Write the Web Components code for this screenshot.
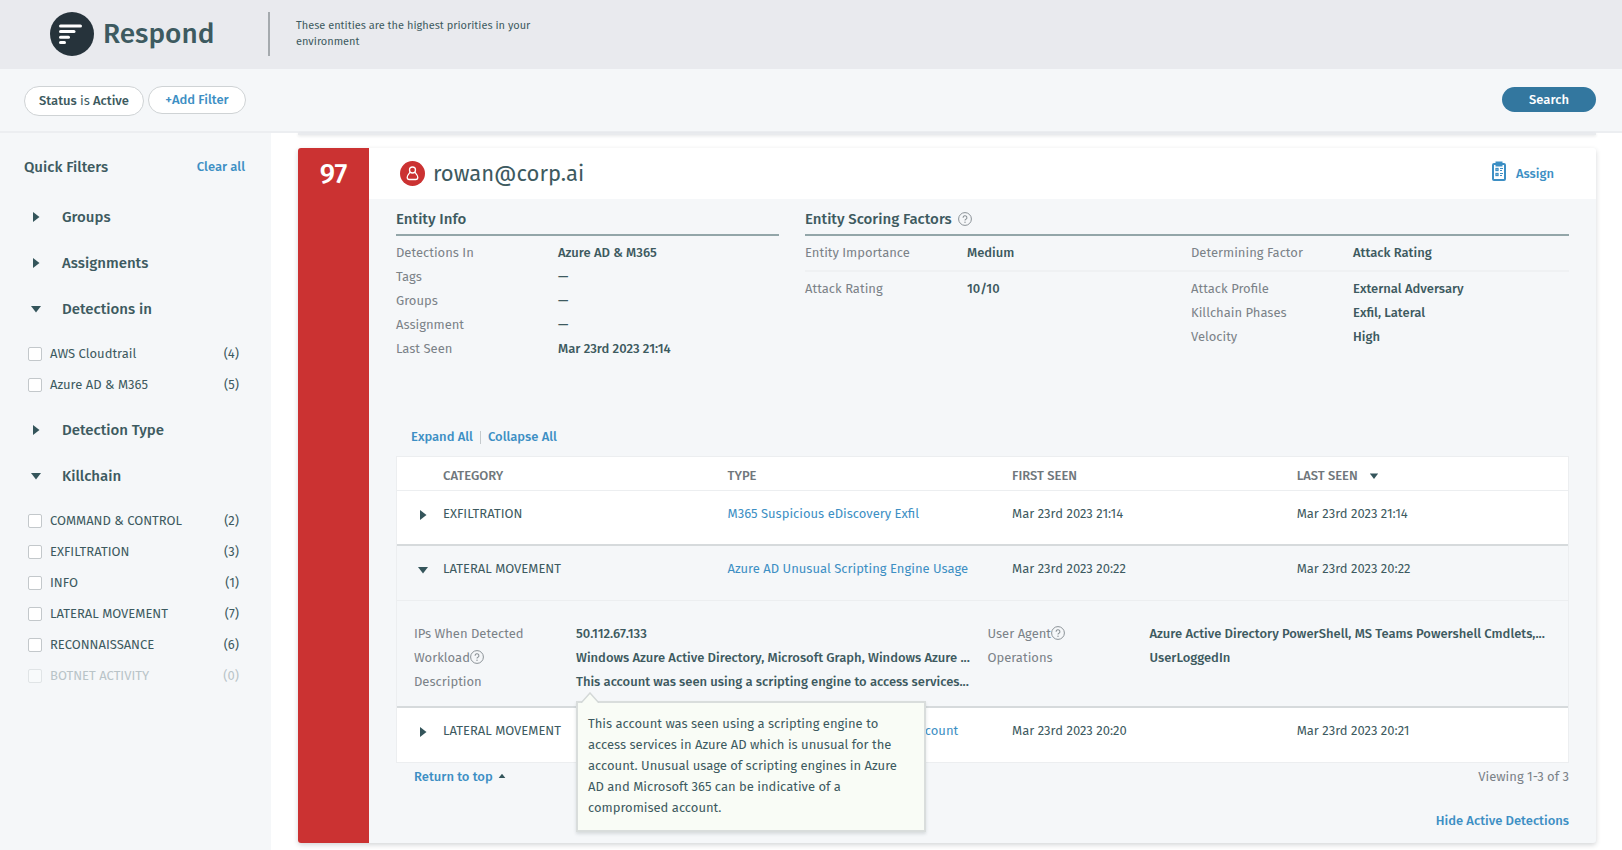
<!DOCTYPE html>
<html lang="en">
<head>
<meta charset="utf-8">
<meta name="viewport" content="width=device-width, initial-scale=1">
<title>Respond</title>
<style>
  :root {
    --ink: #3d5a60;
    --muted: #7b8288;
    --link: #3d8fc4;
    --panel: #f5f7f9;
    --line: #eceef0;
    --rule: #93a6a9;
    --danger: #cb3232;
  }
  body {
    margin: 0;
    background: #fff;
    color: var(--ink);
    font: 400 13px/24px "Fira Sans", Roboto, "Noto Sans", sans-serif;
  }
</style>
</head>
<body>
<respond-app></respond-app>

<script>
const define = (name, html, setup) => {
  const tpl = document.createElement('template');
  tpl.innerHTML = html;
  customElements.define(name, class extends HTMLElement {
    constructor() {
      super();
      this.attachShadow({ mode: 'open' }).append(tpl.content.cloneNode(true));
    }
    connectedCallback() {
      if (setup && !this.ready) { this.ready = true; setup(this, this.shadowRoot); }
    }
  });
};

/* Small triangle: dir = right | down | up */
define('caret-icon', `
  <style>
    :host { display: inline-flex; width: 12px; height: 12px; color: #34555b; }
    svg { width: 12px; height: 12px; fill: currentColor; }
    :host([dir=down]) svg { transform: rotate(90deg); }
    :host([dir=up]) svg { transform: rotate(-90deg); }
    :host([size=medium]), :host([size=medium]) svg { width: 10px; height: 10px; }
    :host([size=small]), :host([size=small]) svg { width: 8px; height: 8px; }
  </style>
  <svg viewBox="0 0 12 12" aria-hidden="true"><path d="M3 1 9.500 6 3 11z"/></svg>`);

define('help-icon', `
  <style>
    :host { display: inline-flex; width: 14px; height: 14px; vertical-align: -2px; color: #8b9297; }
    svg { width: 14px; height: 14px; fill: none; stroke: currentColor; }
  </style>
  <svg viewBox="0 0 14 14" role="img" aria-label="Help">
    <circle cx="7" cy="7" r="6.4"/>
    <path d="M5.100 5.700a1.900 1.900 0 1 1 2.800 1.600c-.6.3-.9.6-.9 1.300" stroke-width="1.100"/>
    <circle cx="7" cy="10.300" r=".7" fill="currentColor" stroke="none"/>
  </svg>`);

define('app-header', `
  <style>
    :host { display: flex; align-items: center; box-sizing: border-box; height: 69px; padding: 0 50px 2px; background: #e9eaee; }
    svg { width: 44px; height: 44px; flex: none; }
    h1 { margin: 0 0 0 9px; width: 165px; font-size: 28px; line-height: 36px; font-weight: 500; }
    p { margin: 0; border-left: 2px solid #a5aaae; padding: 6px 0 6px 26px; font-size: 11px; line-height: 16px; }
    span { display: block; max-width: 240px; }
  </style>
  <svg viewBox="0 0 44 44" aria-hidden="true">
    <circle cx="22" cy="22" r="22" fill="#26333b"/>
    <g stroke="#fff" stroke-width="3" stroke-linecap="round">
      <path d="M10.500 14H30.500"/><path d="M10.500 19.600H24"/><path d="M10.500 25.200H18.500"/><path d="M10.500 30.600H14.500"/>
    </g>
  </svg>
  <h1>Respond</h1>
  <p><span>These entities are the highest priorities in your environment</span></p>`);

define('filter-bar', `
  <style>
    :host { display: flex; align-items: flex-start; gap: 4px; box-sizing: border-box; height: 64px; padding: 17px 26px 0 24px;
            background: var(--panel); border-bottom: 2px solid #eceef1; }
    button { box-sizing: border-box; height: 28px; padding: 0; border: 1px solid #cfd3d5; border-radius: 14px; background: #fff;
             font: inherit; font-weight: 500; line-height: 20px; color: inherit; }
    .status { height: 30px; width: 120px; border-radius: 15px; }
    .status span { font-weight: 400; }
    .add { width: 98px; color: var(--link); }
    .search { margin: 1px 0 0 auto; width: 94px; height: 25px; border: 0; background: #33779f; color: #fff; }
  </style>
  <button class="status">Status <span>is</span> Active</button>
  <button class="add">+Add Filter</button>
  <button class="search">Search</button>`);

define('filter-group', `
  <style>
    :host { display: block; }
    button { display: flex; align-items: center; width: 100%; height: 46px; margin: 0; padding: 0; border: 0; background: none;
             font: inherit; font-size: 15px; font-weight: 500; line-height: 22px; color: inherit; text-align: left; }
    caret-icon { margin: 0 20px 0 6px; }
    .items { display: none; padding: 6px 0 7px 4px; }
    :host([open]) .items { display: block; }
  </style>
  <button><caret-icon></caret-icon><span></span></button>
  <div class="items"><slot></slot></div>`, (el, root) => {
  root.querySelector('span').textContent = el.getAttribute('label');
  const sync = () => {
    root.querySelector('caret-icon').setAttribute('dir', el.hasAttribute('open') ? 'down' : 'right');
    root.querySelector('button').setAttribute('aria-expanded', el.hasAttribute('open'));
  };
  root.querySelector('button').addEventListener('click', () => { el.toggleAttribute('open'); sync(); });
  sync();
});

define('filter-option', `
  <style>
    :host { display: block; }
    label { display: flex; align-items: center; height: 31px; padding-right: 6px; line-height: 20px; }
    input { appearance: none; box-sizing: border-box; width: 14px; height: 14px; margin: 0 8px 0 0; border: 1px solid #c3c8cb;
            border-radius: 2px; background: #fff; }
    input:checked { background: var(--link); }
    .count { margin-left: auto; }
    :host([disabled]) label { color: #b9c4c8; }
    :host([disabled]) input { border-color: #e0e4e6; background: #f8fafb; }
  </style>
  <label><input type="checkbox"><span><slot></slot></span><span class="count"></span></label>`, (el, root) => {
  root.querySelector('.count').textContent = '(' + el.getAttribute('count') + ')';
  root.querySelector('input').disabled = el.hasAttribute('disabled');
});

define('quick-filters', `
  <style>
    :host { display: block; box-sizing: border-box; padding: 17px 26px 0 24px; background: var(--panel); }
    header { display: flex; align-items: center; justify-content: space-between; height: 34px; margin-bottom: 10px; }
    h2 { margin: 0; font-size: 15px; font-weight: 500; }
    a { color: var(--link); font-weight: 500; text-decoration: none; }
  </style>
  <header><h2>Quick Filters</h2><a href="#clear">Clear all</a></header>
  <filter-group label="Groups"></filter-group>
  <filter-group label="Assignments"></filter-group>
  <filter-group label="Detections in" open>
    <filter-option count="4">AWS Cloudtrail</filter-option>
    <filter-option count="5">Azure AD &amp; M365</filter-option>
  </filter-group>
  <filter-group label="Detection Type"></filter-group>
  <filter-group label="Killchain" open>
    <filter-option count="2">COMMAND &amp; CONTROL</filter-option>
    <filter-option count="3">EXFILTRATION</filter-option>
    <filter-option count="1">INFO</filter-option>
    <filter-option count="7">LATERAL MOVEMENT</filter-option>
    <filter-option count="6">RECONNAISSANCE</filter-option>
    <filter-option count="0" disabled>BOTNET ACTIVITY</filter-option>
  </filter-group>`);

/* One label and value pair */
define('info-row', `
  <style>
    :host { display: grid; grid-template-columns: 162px minmax(0, 1fr); line-height: 24px; }
    .label { color: var(--muted); white-space: nowrap; }
    .value { position: relative; font-weight: 500; white-space: nowrap; }
  </style>
  <div class="label"><span></span><slot name="help"></slot></div>
  <div class="value"><slot></slot></div>`, (el, root) => {
  root.querySelector('.label span').textContent = el.getAttribute('label');
});

define('info-section', `
  <style>
    :host { display: block; min-width: 0; }
    h3 { display: flex; align-items: center; gap: 6px; height: 30px; margin: 0 0 5px; border-bottom: 2px solid var(--rule);
         font-size: 15px; line-height: 30px; font-weight: 500; }
  </style>
  <h3><slot name="title"></slot></h3>
  <slot></slot>`);

define('tool-tip', `
  <style>
    :host { display: block; position: absolute; z-index: 2; top: 31px; left: 0; box-sizing: border-box; width: 350px;
            padding: 10px 10px 12px; border: 2px solid #d9dddc; background: #f9fcf6; box-shadow: 0 2px 3px rgba(60, 80, 85, .16);
            font-weight: 400; line-height: 21px; white-space: normal; }
    svg { position: absolute; top: -11px; left: 3px; width: 18px; height: 11px; }
  </style>
  <svg viewBox="0 0 18 11" aria-hidden="true"><path d="M0 11 9 1l9 10" fill="#f9fcf6" stroke="#d3d8d7" stroke-width="1.500"/></svg>
  <slot></slot>`);

define('detections-table', `
  <style>
    :host { display: block; }
    table { width: 100%; table-layout: fixed; border-collapse: separate; border-spacing: 0; border: 1px solid var(--line); background: #fff; }
    col.toggle { width: 46px; }
    col.wide { width: 24.3%; }
    th, td { padding: 0; text-align: left; vertical-align: top; white-space: nowrap; }
    th { height: 33px; padding-top: 5px; box-sizing: border-box; border-bottom: 1px solid var(--line); font-weight: 500; line-height: 28px; color: #70777c; }
    th caret-icon { margin-left: 11px; vertical-align: -1px; }
    tr.row td { box-sizing: border-box; height: 55px; padding-top: 11px; border-bottom: 2px solid #d6dadc; line-height: 24px; }
    tr.row:last-child td { border-bottom: 0; height: 54px; }
    tr.open td, tr.details td { background: var(--panel); }
    tr.row.open td { border-bottom: 1px solid var(--line); }
    tr.details > td { height: 107px; padding: 21px 17px 0; box-sizing: border-box; border-bottom: 2px solid #d6dadc; }
    a { color: var(--link); text-decoration: none; }
    button { display: flex; align-items: center; height: 26px; margin: 0; padding: 0 0 0 20px; border: 0; background: none; }
    .pair { display: grid; grid-template-columns: minmax(0, 1fr) minmax(0, 1fr); column-gap: 10px; }
  </style>
  <table>
    <colgroup><col class="toggle"><col class="wide"><col class="wide"><col class="wide"><col></colgroup>
    <thead>
      <tr><th></th><th>CATEGORY</th><th>TYPE</th><th>FIRST SEEN</th><th>LAST SEEN<caret-icon dir="down" size="medium"></caret-icon></th></tr>
    </thead>
    <tbody>
      <tr class="row">
        <td><button aria-label="Expand"><caret-icon dir="right"></caret-icon></button></td>
        <td>EXFILTRATION</td><td><a href="#d1">M365 Suspicious eDiscovery Exfil</a></td>
        <td>Mar 23rd 2023 21:14</td><td>Mar 23rd 2023 21:14</td>
      </tr>
      <tr class="row open">
        <td><button aria-label="Collapse"><caret-icon dir="down"></caret-icon></button></td>
        <td>LATERAL MOVEMENT</td><td><a href="#d2">Azure AD Unusual Scripting Engine Usage</a></td>
        <td>Mar 23rd 2023 20:22</td><td>Mar 23rd 2023 20:22</td>
      </tr>
      <tr class="details">
        <td colspan="5">
          <div class="pair">
            <div>
              <info-row label="IPs When Detected">50.112.67.133</info-row>
              <info-row label="Workload"><help-icon slot="help"></help-icon>Windows Azure Active Directory, Microsoft Graph, Windows Azure ...</info-row>
              <info-row label="Description">This account was seen using a scripting engine to access services...<tool-tip>This account was seen using a scripting engine to access services in Azure AD which is unusual for the account. Unusual usage of scripting engines in Azure AD and Microsoft 365 can be indicative of a compromised account.</tool-tip></info-row>
            </div>
            <div>
              <info-row label="User Agent"><help-icon slot="help"></help-icon>Azure Active Directory PowerShell, MS Teams Powershell Cmdlets,...</info-row>
              <info-row label="Operations">UserLoggedIn</info-row>
            </div>
          </div>
        </td>
      </tr>
      <tr class="row">
        <td><button aria-label="Expand"><caret-icon dir="right"></caret-icon></button></td>
        <td>LATERAL MOVEMENT</td><td><a href="#d3">Azure AD Newly Created Owner Account</a></td>
        <td>Mar 23rd 2023 20:20</td><td>Mar 23rd 2023 20:21</td>
      </tr>
    </tbody>
  </table>`);

define('entity-card', `
  <style>
    :host { display: grid; grid-template-columns: 71px minmax(0, 1fr); border-radius: 3px; overflow: hidden; background: var(--panel);
            box-shadow: 0 2px 5px rgba(40, 50, 60, .2); }
    .score { padding-top: 10px; background: var(--danger); color: #fff; text-align: center; font-size: 28px; line-height: 32px; font-weight: 500; }
    .head { display: flex; align-items: center; height: 51px; padding: 0 42px 0 31px; background: #fff; }
    .head svg.user { width: 25px; height: 25px; }
    h2 { margin: 0 auto 0 8px; font-size: 22px; line-height: 32px; font-weight: 400; }
    button.assign { display: flex; align-items: center; gap: 9px; padding: 0; border: 0; background: none; font: inherit; font-weight: 500; color: var(--link); }
    .assign svg { width: 16px; height: 22px; margin-bottom: 5px; }
    .body { padding: 5px 27px 10px; }
    .info { display: grid; grid-template-columns: minmax(0, 383fr) minmax(0, 764fr); column-gap: 26px; min-height: 207px; align-items: start; }
    .pair { display: grid; grid-template-columns: minmax(0, 1fr) minmax(0, 1fr); column-gap: 8px; }
    .pair + .pair { border-top: 2px solid #eff1f3; padding-top: 5px; margin-top: 5px; }
    nav { display: flex; align-items: center; gap: 7px; height: 24px; margin: 14px 0 7px; padding-left: 15px; }
    nav i { width: 1px; height: 13px; background: #c5cacd; }
    a { color: var(--link); font-weight: 500; text-decoration: none; }
    .foot { display: flex; justify-content: space-between; align-items: center; height: 28px; padding-left: 18px; }
    .foot caret-icon { margin-left: 5px; vertical-align: 1px; }
    .foot span { color: var(--muted); }
    .hide { display: flex; justify-content: flex-end; margin-top: 18px; }
  </style>
  <div class="score">97</div>
  <div>
    <div class="head">
      <svg class="user" viewBox="0 0 25 25" aria-hidden="true">
        <circle cx="12.500" cy="12.500" r="12.500" fill="#cb3232"/>
        <g fill="none" stroke="#fff" stroke-width="1.300" stroke-linejoin="round">
          <circle cx="12.500" cy="9" r="3"/>
          <path d="M10.300 11c-1.200 1.600-3.100 3.200-3.100 5.300 0 1.500.8 2.200 2.100 2.200h6.400c1.300 0 2.100-.7 2.100-2.200 0-2.100-1.900-3.700-3.100-5.300"/>
        </g>
      </svg>
      <h2>rowan@corp.ai</h2>
      <button class="assign">
        <svg viewBox="0 0 16 22" fill="none" stroke="#3d8fc4" aria-hidden="true">
          <rect x="2" y="4" width="12" height="16" rx="1" stroke-width="2"/>
          <path d="M4.500 2.500h7M4.500 5.500h7" stroke-width="2"/>
          <rect x="5" y="8.500" width="2" height="2" stroke-width="1.300"/><rect x="5" y="13.500" width="2" height="2" stroke-width="1.300"/>
          <path d="M9 8.500h3M9 10.500h2M9 13.500h3M9 15.500h2"/>
        </svg>
        Assign
      </button>
    </div>
    <div class="body">
      <div class="info">
        <info-section>
          <span slot="title">Entity Info</span>
          <info-row label="Detections In">Azure AD &amp; M365</info-row>
          <info-row label="Tags">—</info-row>
          <info-row label="Groups">—</info-row>
          <info-row label="Assignment">—</info-row>
          <info-row label="Last Seen">Mar 23rd 2023 21:14</info-row>
        </info-section>
        <info-section>
          <span slot="title">Entity Scoring Factors</span><help-icon slot="title"></help-icon>
          <div class="pair">
            <info-row label="Entity Importance">Medium</info-row>
            <info-row label="Determining Factor">Attack Rating</info-row>
          </div>
          <div class="pair">
            <info-row label="Attack Rating">10/10</info-row>
            <div>
              <info-row label="Attack Profile">External Adversary</info-row>
              <info-row label="Killchain Phases">Exfil, Lateral</info-row>
              <info-row label="Velocity">High</info-row>
            </div>
          </div>
        </info-section>
      </div>
      <nav><a href="#expand">Expand All</a><i></i><a href="#collapse">Collapse All</a></nav>
      <detections-table></detections-table>
      <div class="foot"><div><a href="#top">Return to top</a><caret-icon dir="up" size="small"></caret-icon></div><span>Viewing 1-3 of 3</span></div>
      <div class="hide"><a href="#hide">Hide Active Detections</a></div>
    </div>
  </div>`);

define('respond-app', `
  <style>
    :host { display: flex; flex-direction: column; min-height: 100vh; }
    .main { display: grid; grid-template-columns: 271px minmax(0, 1fr); flex: 1; }
    main { padding: 0 26px 7px 27px; }
    /* lower edge of the card scrolled away above */
    .previous { height: 2px; margin-bottom: 13px; background: #e9ebee; box-shadow: 0 1px 3px rgba(40, 50, 60, .14); }
  </style>
  <app-header></app-header>
  <filter-bar></filter-bar>
  <div class="main">
    <quick-filters></quick-filters>
    <main><div class="previous"></div><entity-card></entity-card></main>
  </div>`);
</script>
</body>
</html>
